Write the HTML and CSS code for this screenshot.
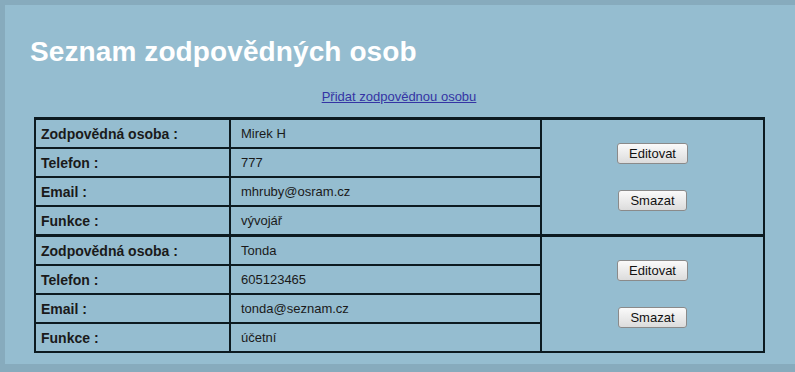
FILE: index.html
```html
<!DOCTYPE html>
<html lang="cs">
<head>
  <meta charset="UTF-8">
  <title>Seznam zodpovědných osob</title>
  <link rel="stylesheet" href="styles.css">
</head>
<body>

  <div class="page">
    <h1>Seznam zodpovědných osob</h1>

    <p class="add-link"><a href="#">Přidat zodpovědnou osobu</a></p>

    <table class="people">
      <!-- osoba 1 -->
      <tr class="first">
        <td class="label">Zodpovědná osoba :</td>
        <td class="value">Mirek H</td>
        <td class="actions" rowspan="4">
          <button>Editovat</button>
          <button>Smazat</button>
        </td>
      </tr>
      <tr>
        <td class="label">Telefon :</td>
        <td class="value">777</td>
      </tr>
      <tr>
        <td class="label">Email :</td>
        <td class="value">mhruby@osram.cz</td>
      </tr>
      <tr>
        <td class="label">Funkce :</td>
        <td class="value">vývojář</td>
      </tr>

      <!-- osoba 2 -->
      <tr class="first">
        <td class="label">Zodpovědná osoba :</td>
        <td class="value">Tonda</td>
        <td class="actions" rowspan="4">
          <button>Editovat</button>
          <button>Smazat</button>
        </td>
      </tr>
      <tr>
        <td class="label">Telefon :</td>
        <td class="value">605123465</td>
      </tr>
      <tr>
        <td class="label">Email :</td>
        <td class="value">tonda@seznam.cz</td>
      </tr>
      <tr>
        <td class="label">Funkce :</td>
        <td class="value">účetní</td>
      </tr>
    </table>
  </div>

</body>
</html>
```

FILE: styles.css
```css
  body, html {
    margin: 0;
    padding: 0;
    font-family: "Liberation Sans", Arial, sans-serif;
    background-color: #87abbd;
  }
  .page {
    margin: 5px 0 8px 5px;
    height: 359px;
    padding: 0 0 0 25px;
    background-color: #95bdd0;
    box-sizing: border-box;
  }
  h1 {
    margin: 0;
    padding-top: 31px;
    height: 44px;
    font-size: 28px;
    font-weight: bold;
    color: #ffffff;
    letter-spacing: 0.1px;
  }
  .add-link {
    margin: 0 0 0 4px;
    padding-top: 9px;
    height: 37px;
    width: 730px;
    box-sizing: border-box;
    text-align: center;
    font-size: 13px;
  }
  .add-link a {
    color: #3434a4;
  }
  .people {
    margin-left: 4px;
    width: 731px;
    border-collapse: collapse;
    border: 2px solid #0c1a20;
    font-size: 13px;
    color: #1a1a1a;
  }
  .people td {
    border: 2px solid #0c1a20;
    height: 27px;
    padding: 0 0 0 10px;
  }
  .people tr.first td {
    border-top-width: 3px;
  }
  .people td.label {
    width: 188px;
    font-weight: bold;
    font-size: 14px;
    padding-left: 5px;
  }
  .value {
    width: 299px;
  }
  .actions {
    text-align: center;
  }
  .people td.actions {
    padding: 0;
  }
  .actions button {
    display: block;
    margin: 0 auto;
    padding: 2px 11px;
    font-family: "Liberation Sans", Arial, sans-serif;
    font-size: 13px;
    color: #111;
    background: linear-gradient(#fafafa, #dcdcdc);
    border: 1px solid #8a8a8a;
    border-radius: 3px;
    cursor: pointer;
  }
  .actions button + button {
    margin-top: 26px;
  }
```
